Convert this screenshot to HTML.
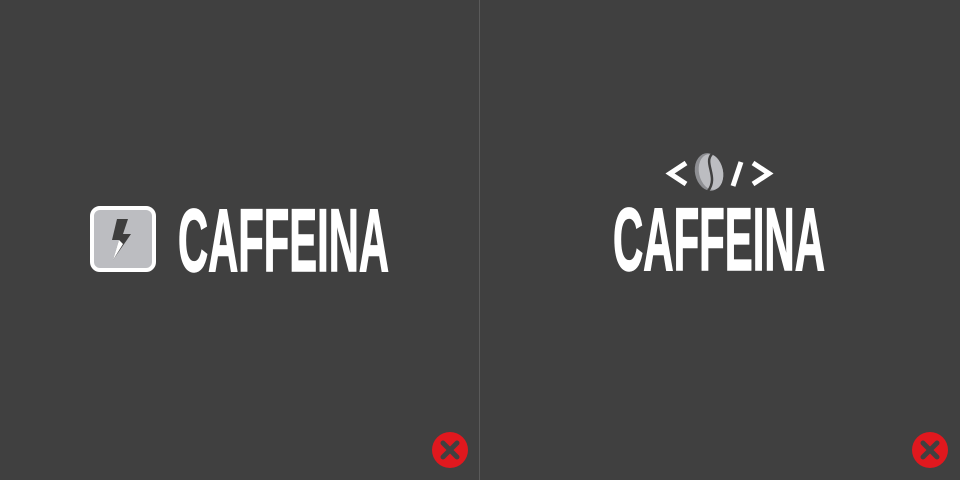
<!DOCTYPE html>
<html><head><style>
html,body{margin:0;padding:0;background:#404040;}
svg{display:block}
</style></head><body>
<svg width="960" height="480" viewBox="0 0 960 480" xmlns="http://www.w3.org/2000/svg">
<rect width="960" height="480" fill="#404040"/>
<rect x="479" y="0" width="1" height="480" fill="#5a5a5a"/>
<!-- left logo -->
<rect x="92" y="208" width="62" height="62" rx="8" fill="#bcbdc1" stroke="#fff" stroke-width="4"/>
<path d="M117 219 L128 219 L123 234 L131 234 L113 260 L119 240 L112 240 Z" fill="#3e3e3e"/>
<path d="M119 240 L113 260 L123 244 Z" fill="#fff"/>
<text x="178" y="271" font-family="Liberation Sans, sans-serif" font-weight="bold" font-size="89" fill="#fff" stroke="#fff" stroke-width="1.5" textLength="211" lengthAdjust="spacingAndGlyphs">CAFFEINA</text>
<!-- right logo -->
<path d="M686 163 L670 173.5 L686 184" stroke="#fff" stroke-width="5" fill="none"/>
<path d="M741 162 L733 186" stroke="#fff" stroke-width="5" fill="none"/>
<path d="M753 163 L769 173.5 L753 184" stroke="#fff" stroke-width="5" fill="none"/>
<ellipse cx="709" cy="172" rx="14" ry="19" transform="rotate(-12 709 172)" fill="#8e8f93"/>
<ellipse cx="711" cy="172" rx="12" ry="18" transform="rotate(-12 711 172)" fill="#bcbdc1"/>
<path d="M712 154 C703 163 719 177 708 191" stroke="#404040" stroke-width="2.5" fill="none"/>
<text x="613" y="270" font-family="Liberation Sans, sans-serif" font-weight="bold" font-size="89" fill="#fff" stroke="#fff" stroke-width="1.5" textLength="212" lengthAdjust="spacingAndGlyphs">CAFFEINA</text>
<!-- red x buttons -->
<g>
<circle cx="450" cy="450" r="18" fill="#e0181e"/>
<path d="M443 443 L457 457 M457 443 L443 457" stroke="#404040" stroke-width="5" stroke-linecap="round"/>
</g>
<g>
<circle cx="930" cy="450" r="18" fill="#e0181e"/>
<path d="M923 443 L937 457 M937 443 L923 457" stroke="#404040" stroke-width="5" stroke-linecap="round"/>
</g>
</svg>
</body></html>
